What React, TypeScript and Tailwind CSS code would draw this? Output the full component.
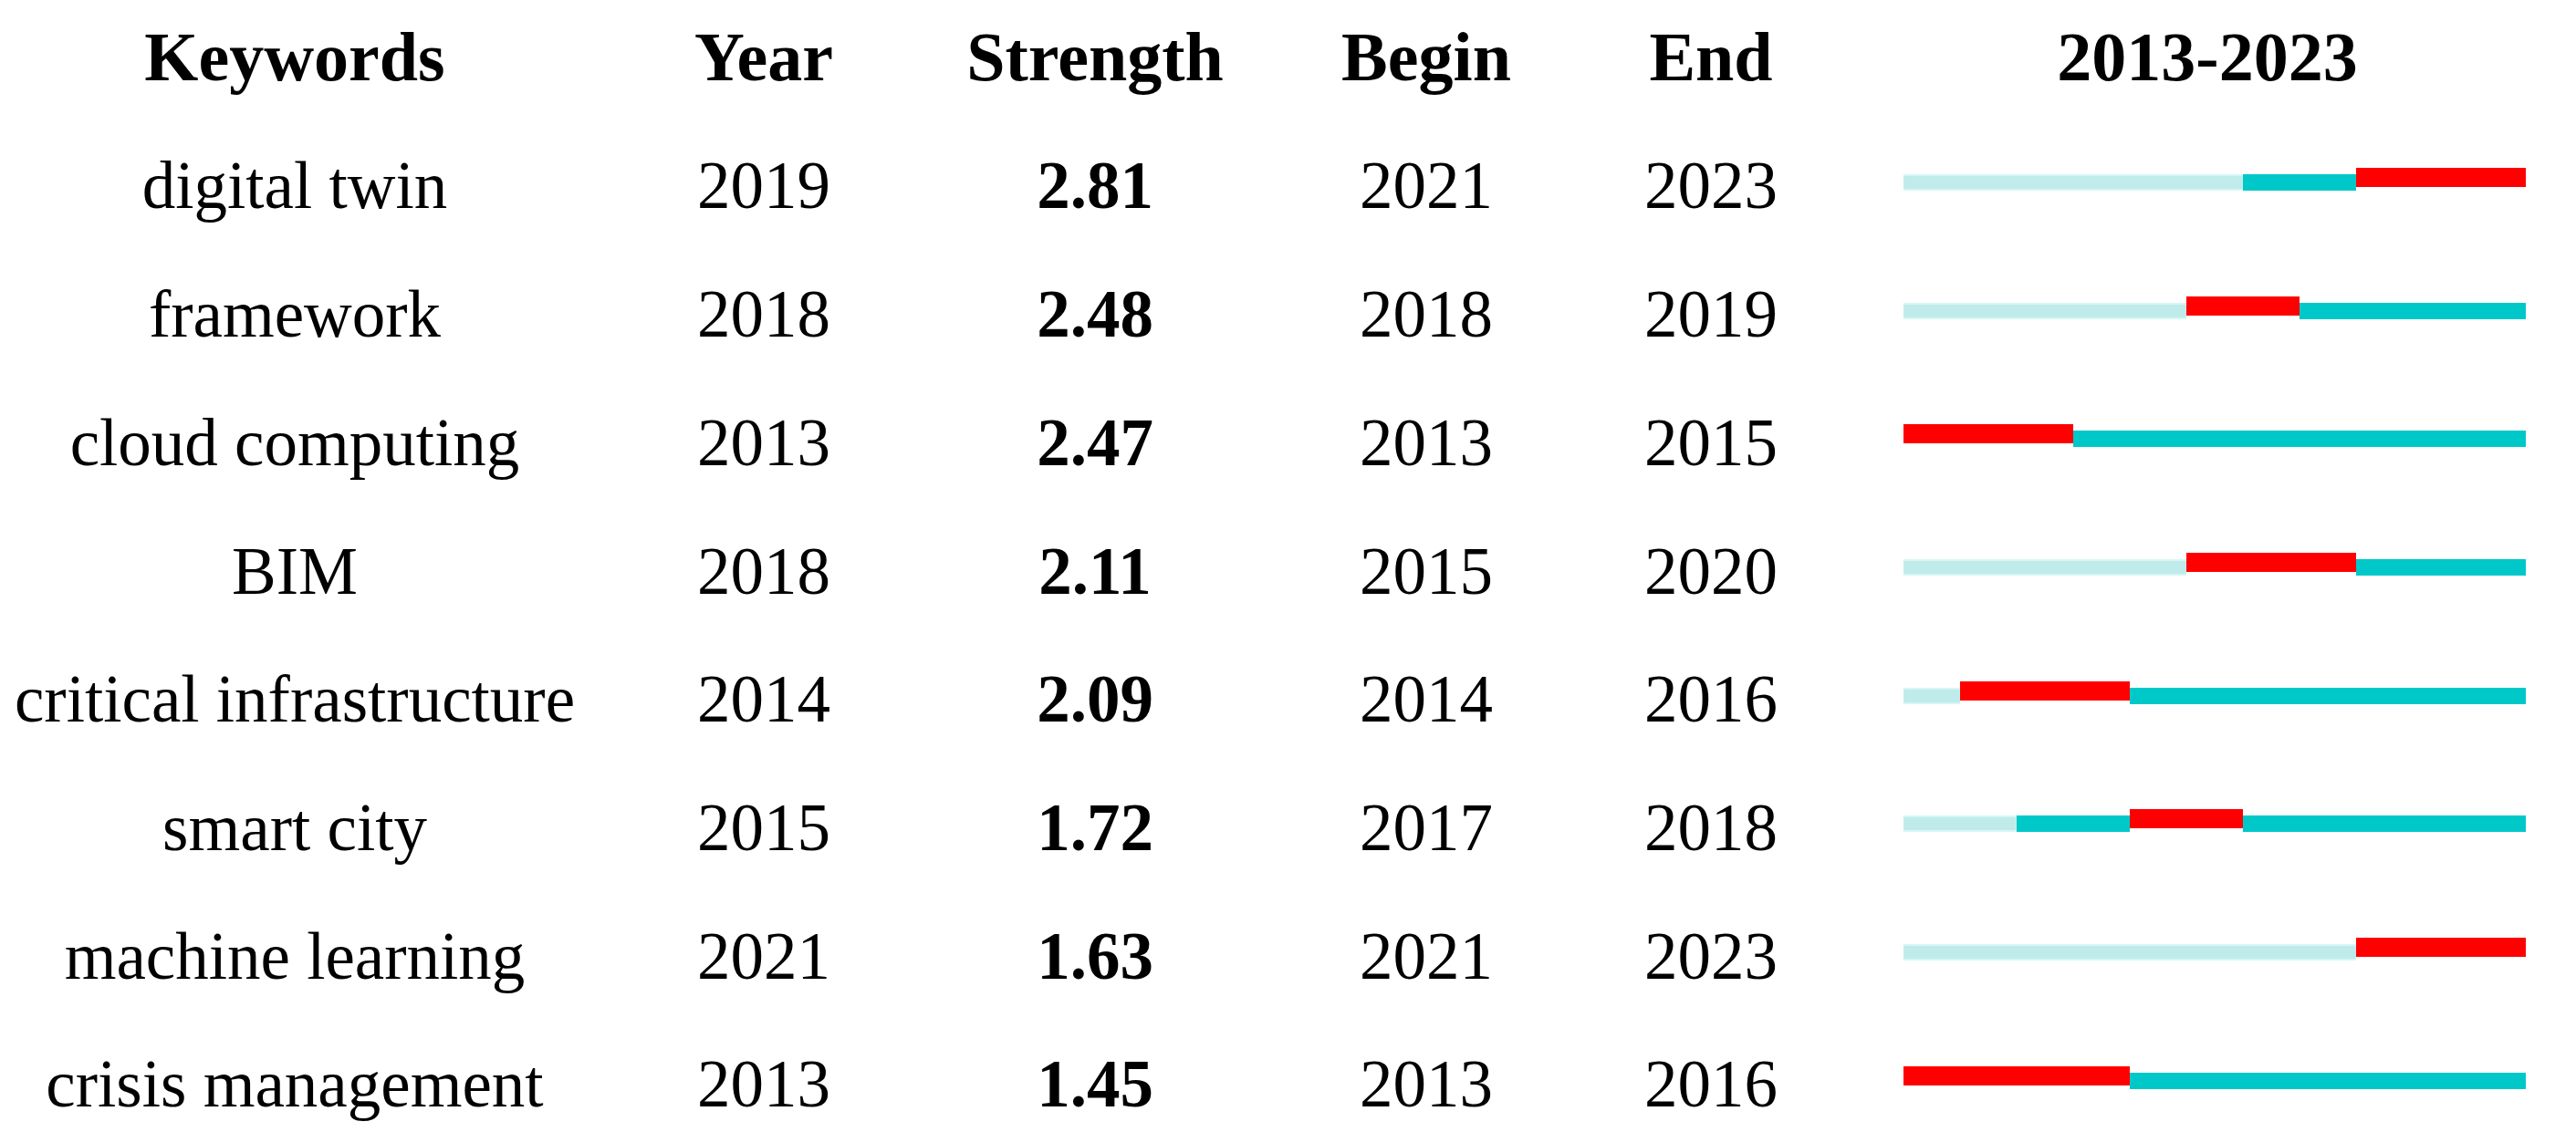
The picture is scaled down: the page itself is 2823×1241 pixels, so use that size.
const START = 2013;
const END = 2023;

type Row = { keyword: string; year: number; strength: string; begin: number; end: number };

const rows: Row[] = [
  { keyword: 'digital twin', year: 2019, strength: '2.81', begin: 2021, end: 2023 },
  { keyword: 'framework', year: 2018, strength: '2.48', begin: 2018, end: 2019 },
  { keyword: 'cloud computing', year: 2013, strength: '2.47', begin: 2013, end: 2015 },
  { keyword: 'BIM', year: 2018, strength: '2.11', begin: 2015, end: 2020 },
  { keyword: 'critical infrastructure', year: 2014, strength: '2.09', begin: 2014, end: 2016 },
  { keyword: 'smart city', year: 2015, strength: '1.72', begin: 2017, end: 2018 },
  { keyword: 'machine learning', year: 2021, strength: '1.63', begin: 2021, end: 2023 },
  { keyword: 'crisis management', year: 2013, strength: '1.45', begin: 2013, end: 2016 },
];

const grid = 'grid grid-cols-[646px_382px_344px_382px_242px_1fr]';

// one segment per year: light before the keyword appears, red during the burst, teal otherwise
function BurstBar({ row }: { row: Row }) {
  const burstStart = Math.max(row.year, row.begin);
  const years = Array.from({ length: END - START + 1 }, (_, i) => START + i);

  return (
    <div className="ml-[90px] flex h-[18px] w-[682px] items-start">
      {years.map((y) => {
        if (y < row.year) {
          return (
            <div
              key={y}
              className="h-[18px] w-[62px] border-y-2 border-[#d6f6f5] bg-[#bfeceb]"
            />
          );
        }
        if (y >= burstStart && y <= row.end) {
          return <div key={y} className="-mt-[7px] h-[21px] w-[62px] bg-[#ff0000]" />;
        }
        return <div key={y} className="h-[18px] w-[62px] bg-[#00c8c8]" />;
      })}
    </div>
  );
}

export default function App() {
  return (
    <div className="h-[1241px] w-[2823px] overflow-hidden bg-white font-['Liberation_Serif',serif] text-black">
      {/* Header */}
      <div className={`${grid} h-[133.6px] items-center pb-[10px] text-[76px] font-bold leading-none`}>
        <div className="text-center">Keywords</div>
        <div className="text-center">Year</div>
        <div className="text-center">Strength</div>
        <div className="text-center">Begin</div>
        <div className="text-center">End</div>
        <div className="ml-[90px] w-[682px] pr-[16px] text-center">2013-2023</div>
      </div>

      {/* Rows */}
      {rows.map((row) => (
        <div
          key={row.keyword}
          className={`${grid} h-[140.7px] items-center text-[73px] leading-none`}
        >
          <div className="whitespace-nowrap text-center">{row.keyword}</div>
          <div className="text-center">{row.year}</div>
          <div className="text-center font-bold">{row.strength}</div>
          <div className="text-center">{row.begin}</div>
          <div className="text-center">{row.end}</div>
          <div className="flex items-center pb-[8px]">
            <BurstBar row={row} />
          </div>
        </div>
      ))}
    </div>
  );
}
